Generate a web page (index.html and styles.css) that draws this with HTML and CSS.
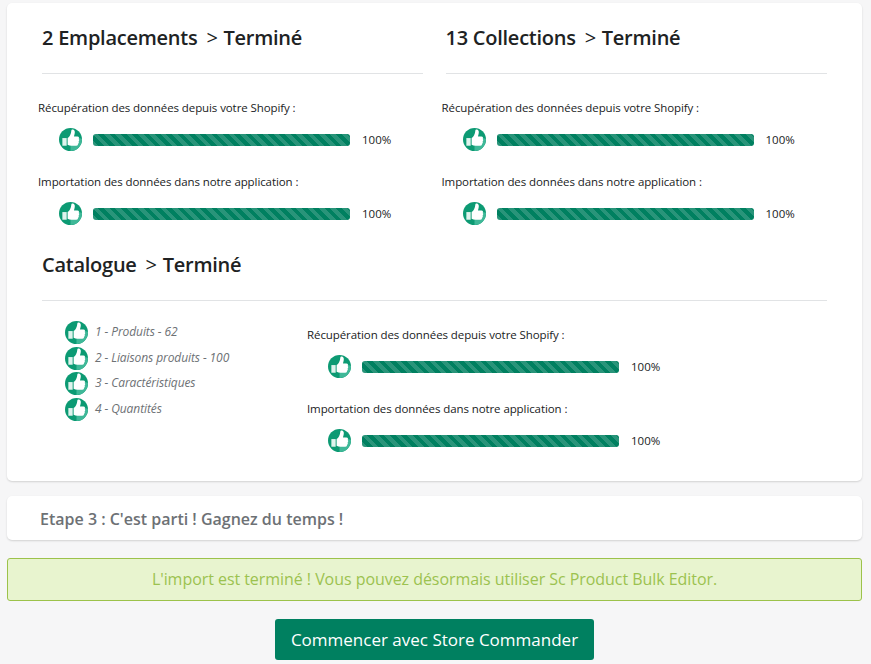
FILE: index.html
```html
<!DOCTYPE html>
<html lang="fr">
<head>
<meta charset="utf-8">
<title>Import terminé</title>
<link rel="stylesheet" href="styles.css">
</head>
<body>
<svg class="defs" width="0" height="0" aria-hidden="true">
  <symbol id="thumb" viewBox="0 0 24 24">
    <circle cx="12" cy="12" r="12" fill="#0c9a73"/>
    <path d="M12 24V9h6l6 2.500A12 12 0 0 1 12 24z" fill="#3fb898"/>
    <path d="M3.500 10.500H8V18.500H3.500z" fill="#dff3ed"/>
    <path d="M9 10.500C11 9 12.600 6.500 12.900 2.500c.1-1.300 3-1.300 3.500 1 .3 1.600-.2 3.600-.8 5.300h3.700c1.600 0 2.100 1.600 1.200 2.600.8.700.8 2-.1 2.600.6.900.3 2-.6 2.500.2 1.200-.5 2-1.800 2H13c-1.500 0-2.700-.5-4-1z" fill="#fff"/>
  </symbol>
</svg>
<main class="page">
  <section class="card card-main">
    <div class="cols">
      <div class="col">
        <h2 class="title">2 Emplacements <span class="sep">&gt;</span> Terminé</h2>
        <p class="label">Récupération des données depuis votre Shopify :</p>
        <div class="progress-row"><svg class="icon"><use href="#thumb"/></svg><div class="bar"></div><span class="pct">100%</span></div>
        <p class="label">Importation des données dans notre application :</p>
        <div class="progress-row"><svg class="icon"><use href="#thumb"/></svg><div class="bar"></div><span class="pct">100%</span></div>
      </div>
      <div class="col">
        <h2 class="title">13 Collections <span class="sep">&gt;</span> Terminé</h2>
        <p class="label">Récupération des données depuis votre Shopify :</p>
        <div class="progress-row"><svg class="icon"><use href="#thumb"/></svg><div class="bar"></div><span class="pct">100%</span></div>
        <p class="label">Importation des données dans notre application :</p>
        <div class="progress-row"><svg class="icon"><use href="#thumb"/></svg><div class="bar"></div><span class="pct">100%</span></div>
      </div>
    </div>
    <h2 class="title title-wide">Catalogue <span class="sep">&gt;</span> Terminé</h2>
    <div class="catalog">
      <ul class="steps">
        <li class="step"><svg class="icon"><use href="#thumb"/></svg>1 - Produits - 62</li>
        <li class="step"><svg class="icon"><use href="#thumb"/></svg>2 - Liaisons produits - 100</li>
        <li class="step"><svg class="icon"><use href="#thumb"/></svg>3 - Caractéristiques</li>
        <li class="step"><svg class="icon"><use href="#thumb"/></svg>4 - Quantités</li>
      </ul>
      <div class="catalog-progress">
        <p class="label">Récupération des données depuis votre Shopify :</p>
        <div class="progress-row"><svg class="icon"><use href="#thumb"/></svg><div class="bar"></div><span class="pct">100%</span></div>
        <p class="label">Importation des données dans notre application :</p>
        <div class="progress-row"><svg class="icon"><use href="#thumb"/></svg><div class="bar"></div><span class="pct">100%</span></div>
      </div>
    </div>
  </section>
  <section class="card card-step">Etape 3 : C'est parti ! Gagnez du temps !</section>
  <div class="alert">L'import est terminé ! Vous pouvez désormais utiliser Sc Product Bulk Editor.</div>
  <div class="actions"><a class="btn" href="#">Commencer avec Store Commander</a></div>
</main>
</body>
</html>
```
FILE: styles.css
```css
* { box-sizing: border-box; }
html, body { margin: 0; padding: 0; }
body {
  background: #f6f6f7;
  color: #212529;
  font-family: "Open Sans", "Noto Sans", sans-serif;
  height: 664px;
  overflow: hidden;
}
.defs { position: absolute; }
.page { padding: 3px 9px 0 7px; }
.card {
  background: #fff;
  border-radius: 5px;
  box-shadow: 0 1px 2px rgba(0, 0, 0, .15);
}
.card-main { height: 478px; padding: 21px 0 0 31px; }
.cols { display: flex; height: 224px; }
.col { width: 403.5px; }
.title {
  margin: 0 0 24px 4px;
  width: 381px;
  height: 50px;
  border-bottom: 1px solid #e1e3e5;
  font-size: 20px;
  line-height: 27px;
  font-weight: 600;
  letter-spacing: -.25px;
  color: #202223;
}
.sep { margin: 0 1px 0 4px; font-weight: 400; }
.title-wide { width: 785px; margin-top: 3px; margin-bottom: 0; }
.label {
  margin: 0;
  height: 20px;
  font-size: 11.500px;
  line-height: 20px;
  letter-spacing: -.09px;
  color: #202223;
}
.progress-row {
  display: flex;
  align-items: center;
  height: 32px;
  margin: 5px 0 17px 21px;
}
.icon { width: 23px; height: 23px; flex: none; }
.bar {
  width: 257px;
  height: 12px;
  margin: 1px 0 0 11px;
  border-radius: 3px;
  background-color: #008060;
  background-image: repeating-linear-gradient(45deg, rgba(255,255,255,.16) 0 4px, transparent 4px 8px);
}
.pct { margin-left: 12px; font-size: 11.500px; color: #202223; }
.catalog { display: flex; padding-top: 19px; }
.steps { list-style: none; margin: 0; padding: 0 0 0 27px; width: 269px; }
.step {
  display: flex;
  align-items: center;
  gap: 7px;
  height: 25.600px;
  padding-bottom: 2px;
  font-size: 12px;
  font-style: italic;
  letter-spacing: -.09px;
  color: #6d7175;
}
.step .icon { margin-top: 2px; }
.catalog-progress { padding-top: 5px; }
.card-step {
  height: 44px;
  margin-top: 15px;
  padding-left: 33px;
  font-size: 16px;
  font-weight: 600;
  line-height: 47px;
  color: #6d7175;
}
.alert {
  height: 43px;
  margin-top: 18px;
  border: 1px solid #9cc24a;
  border-radius: 3px;
  background: #e8f4cf;
  color: #9cc24f;
  font-size: 16px;
  line-height: 41px;
  letter-spacing: -.05px;
  text-align: center;
}
.actions { display: flex; justify-content: center; margin-top: 18px; }
.btn {
  display: block;
  width: 319px;
  height: 41px;
  border-radius: 3px;
  background: #008060;
  color: #fff;
  font-size: 17px;
  line-height: 41px;
  text-align: center;
  text-decoration: none;
}
```
